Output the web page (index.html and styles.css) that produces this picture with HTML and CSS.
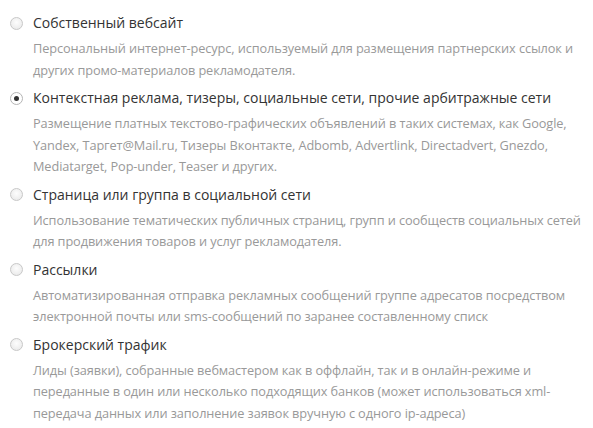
FILE: index.html
```html
<!DOCTYPE html>
<html lang="ru">
<head>
    <meta charset="UTF-8">
    <title>Тип площадки</title>
    <link rel="stylesheet" href="styles.css">
</head>
<body>
    <div class="options">
        <div class="option">
            <label class="option-title"><span class="radio"></span>Собственный вебсайт</label>
            <div class="option-desc">Персональный интернет-ресурс, используемый для размещения партнерских ссылок и других промо-материалов рекламодателя.</div>
        </div>
        <div class="option">
            <label class="option-title"><span class="radio checked"></span>Контекстная реклама, тизеры, социальные сети, прочие арбитражные сети</label>
            <div class="option-desc">Размещение платных текстово-графических объявлений в таких системах, как Google, Yandex, Таргет@Mail.ru, Тизеры Вконтакте, Adbomb, Advertlink, Directadvert, Gnezdo, Mediatarget, Pop-under, Teaser и других.</div>
        </div>
        <div class="option">
            <label class="option-title"><span class="radio"></span>Страница или группа в социальной сети</label>
            <div class="option-desc">Использование тематических публичных страниц, групп и сообществ социальных сетей для продвижения товаров и услуг рекламодателя.</div>
        </div>
        <div class="option">
            <label class="option-title"><span class="radio"></span>Рассылки</label>
            <div class="option-desc">Автоматизированная отправка рекламных сообщений группе адресатов посредством электронной почты или sms-сообщений по заранее составленному списк</div>
        </div>
        <div class="option">
            <label class="option-title"><span class="radio"></span>Брокерский трафик</label>
            <div class="option-desc">Лиды (заявки), собранные вебмастером как в оффлайн, так и в онлайн-режиме и переданные в один или несколько подходящих банков (может использоваться xml-передача данных или заполнение заявок вручную с одного ip-адреса)</div>
        </div>
    </div>
</body>
</html>
```

FILE: styles.css
```css
body {
    margin: 0;
    background: #fff;
    font-family: "Open Sans", Arial, sans-serif;
}
.options {
    padding: 12px 0 0 10px;
}
.option {
    margin-bottom: 6px;
}
.option-title {
    display: flex;
    align-items: center;
    font-size: 14px;
    line-height: 22px;
    color: #333;
}
.radio {
    width: 11px;
    height: 11px;
    border: 1px solid #c8c8c8;
    border-radius: 50%;
    background: radial-gradient(circle at 50% 40%, #fdfdfd 0, #e6e6e6 100%);
    margin-right: 10px;
    flex: none;
    position: relative;
}
.radio.checked {
    border-color: #b5b5b5;
    background: #fff;
}
.radio.checked::after {
    content: "";
    position: absolute;
    left: 3px;
    top: 3px;
    width: 5px;
    height: 5px;
    border-radius: 50%;
    background: #333;
}
.option-desc {
    margin-top: 4px;
    padding-left: 23px;
    font-size: 12.75px;
    letter-spacing: -0.1px;
    line-height: 21.5px;
    color: #999;
}
```
